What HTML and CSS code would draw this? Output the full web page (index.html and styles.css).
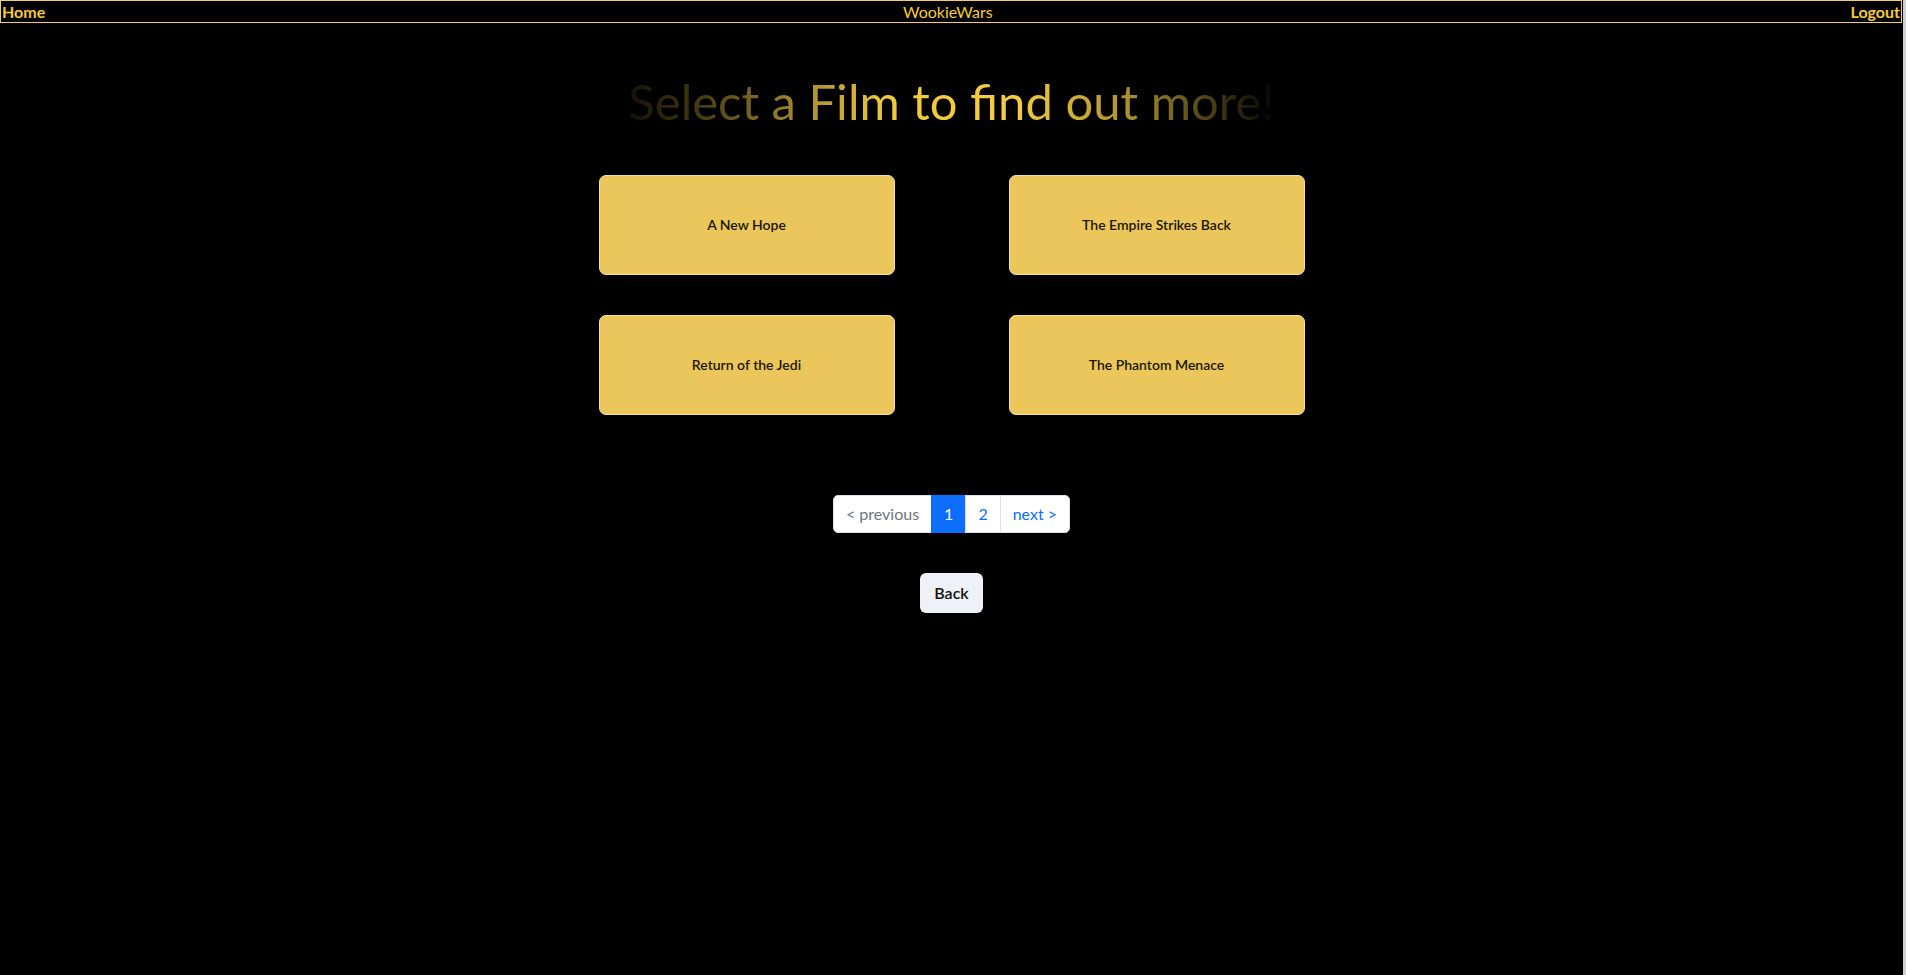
FILE: index.html
```html
<!DOCTYPE html>
<html lang="en">
<head>
<meta charset="utf-8">
<title>WookieWars</title>
<link rel="stylesheet" href="styles.css">
</head>
<body>
<div class="app">
  <nav class="topnav">
    <a class="nav-link nav-home" href="#">Home</a>
    <span class="brand">WookieWars</span>
    <a class="nav-link nav-logout" href="#">Logout</a>
  </nav>
  <main class="content">
    <h1 class="title">Select a Film to find out more!</h1>
    <div class="film-grid">
      <button class="film-card">A New Hope</button>
      <button class="film-card">The Empire Strikes Back</button>
      <button class="film-card">Return of the Jedi</button>
      <button class="film-card">The Phantom Menace</button>
    </div>
    <ul class="pagination">
      <li class="page-item disabled"><span class="page-link">&lt; previous</span></li>
      <li class="page-item active"><span class="page-link">1</span></li>
      <li class="page-item"><a class="page-link" href="#">2</a></li>
      <li class="page-item"><a class="page-link" href="#">next &gt;</a></li>
    </ul>
    <button class="back-btn">Back</button>
  </main>
</div>
<div class="edge"></div>
</body>
</html>
```

FILE: styles.css
```css
html, body {
  margin: 0;
  padding: 0;
  height: 100%;
  background: #000;
}
body {
  display: flex;
  font-family: Lato, "Open Sans", sans-serif;
  color: #fff;
}
.app {
  flex: 1;
  display: flex;
  flex-direction: column;
  min-width: 0;
}
.edge {
  width: 3px;
  background: #cfcfcf;
}
.topnav {
  display: flex;
  align-items: center;
  justify-content: space-between;
  height: 21px;
  border: 1px solid #f0cf68;
  margin-right: 1px;
  font-size: 16px;
  line-height: 21px;
}
.nav-link {
  color: #f5cc3e;
  font-weight: 700;
  text-decoration: none;
  padding: 0 1px;
}
.brand {
  color: #f5cc3e;
  font-weight: 400;
}
.content {
  display: flex;
  flex-direction: column;
  align-items: center;
}
.title {
  margin: 49px 0 44px;
  font-size: 49px;
  font-weight: 400;
  line-height: 1.2;
  background: linear-gradient(90deg, #141104 0%, #3f3512 10%, #9c832a 25%, #f0c93e 40%, #f3cc40 60%, #a88d2e 78%, #3b3211 92%, #050400 100%);
  -webkit-background-clip: text;
  background-clip: text;
  color: transparent;
}
.film-grid {
  display: grid;
  grid-template-columns: 296px 296px;
  column-gap: 114px;
  row-gap: 40px;
}
.film-card {
  height: 100px;
  background: #ebc65a;
  border: 1px solid #f4e0a4;
  border-radius: 7px;
  font-family: Lato, "Open Sans", sans-serif;
  font-size: 14px;
  font-weight: 600;
  color: #1a1608;
  cursor: pointer;
}
.pagination {
  display: flex;
  list-style: none;
  margin: 80px 0 0;
  padding: 0;
  font-size: 16px;
  line-height: 24px;
}
.page-link {
  display: block;
  padding: 6px 12px;
  background: #fff;
  border: 1px solid #dee2e6;
  margin-left: -1px;
  color: #0d6efd;
  text-decoration: none;
}
.page-item:first-child .page-link {
  margin-left: 0;
  border-radius: 5px 0 0 5px;
}
.page-item:last-child .page-link {
  border-radius: 0 5px 5px 0;
}
.page-item.disabled .page-link {
  color: #6c757d;
}
.page-item.active .page-link {
  background: #0d6efd;
  border-color: #0d6efd;
  color: #fff;
}
.back-btn {
  margin-top: 40px;
  height: 40px;
  padding: 0 14px;
  background: #eef1f5;
  border: none;
  border-radius: 6px;
  font-family: Lato, "Open Sans", sans-serif;
  font-size: 16px;
  font-weight: 600;
  color: #111;
  cursor: pointer;
}
```
